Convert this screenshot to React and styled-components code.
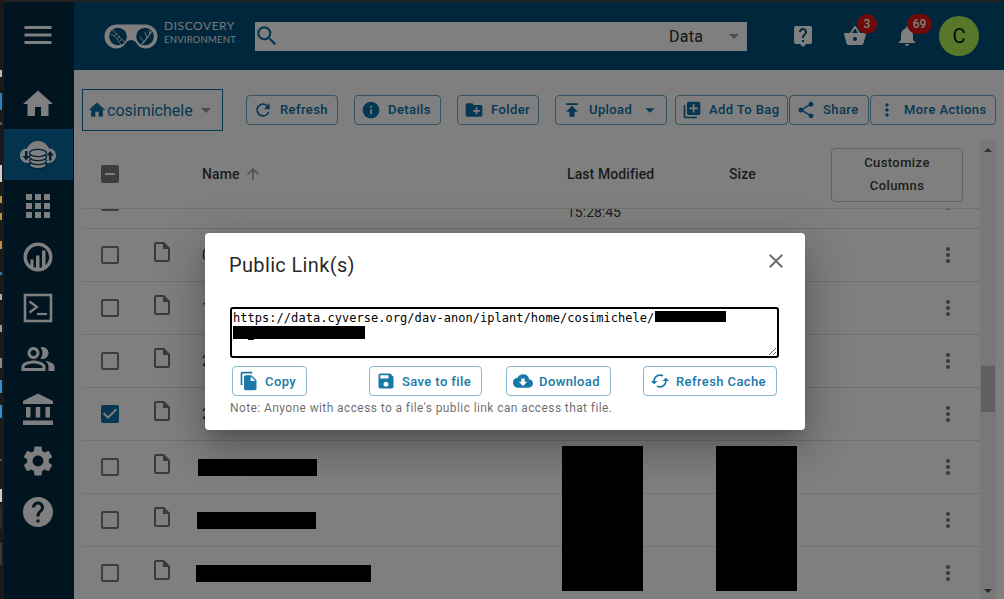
import styled, { createGlobalStyle } from 'styled-components';
import {
  MdAccountBalance,
  MdApps,
  MdArrowDropDown,
  MdArrowUpward,
  MdCached,
  MdCheckBox,
  MdCheckBoxOutlineBlank,
  MdClose,
  MdCloudDownload,
  MdCreateNewFolder,
  MdFileCopy,
  MdHelp,
  MdHome,
  MdIndeterminateCheckBox,
  MdInfo,
  MdLibraryAdd,
  MdLiveHelp,
  MdMenu,
  MdMoreVert,
  MdNotifications,
  MdOutlineInsertDriveFile,
  MdOutlinePeopleAlt,
  MdPublish,
  MdRefresh,
  MdSave,
  MdSearch,
  MdSettings,
  MdShare,
  MdShoppingBasket,
} from 'react-icons/md';

const BLUE = '#0c6ea6';

const GlobalStyle = createGlobalStyle`
  html, body {
    margin: 0;
    height: 100%;
    overflow: hidden;
    background: #1a1a1a;
    font-family: Roboto, "Liberation Sans", sans-serif;
  }
  #root { height: 100%; }
  * { box-sizing: border-box; }
`;

// scraps of the desktop showing at the left edge of the browser window
const desktopBits = [
  { top: 70, height: 7, color: '#b8b8b8' },
  { top: 93, height: 17, color: '#2a80c0' },
  { top: 122, height: 3, color: '#555' },
  { top: 165, height: 17, color: '#ccc' },
  { top: 196, height: 7, color: '#b8923c' },
  { top: 213, height: 7, color: '#b8923c' },
  { top: 241, height: 8, color: '#b8923c' },
  { top: 272, height: 3, color: '#2a80a0' },
  { top: 294, height: 6, color: '#aaa' },
  { top: 325, height: 7, color: '#999' },
  { top: 358, height: 10, color: '#888' },
  { top: 380, height: 13, color: '#2a90d0' },
  { top: 405, height: 13, color: '#2a90d0' },
  { top: 459, height: 2, color: '#555' },
  { top: 489, height: 13, color: '#ccc' },
  { top: 505, height: 24, color: '#2c2c2c' },
  { top: 543, height: 22, color: '#3a3a3a' },
];

const sideItems = [
  { key: 'home', icon: <MdHome size={36} /> },
  { key: 'data', icon: <DataIcon />, active: true },
  { key: 'apps', icon: <MdApps size={36} /> },
  { key: 'analyses', icon: <AnalysesIcon /> },
  { key: 'vice', icon: <TerminalIcon /> },
  { key: 'teams', icon: <MdOutlinePeopleAlt size={36} /> },
  { key: 'collections', icon: <MdAccountBalance size={36} /> },
  { key: 'settings', icon: <MdSettings size={36} /> },
  { key: 'help', icon: <MdHelp size={36} /> },
];

const tools = [
  { label: 'Refresh', icon: <MdRefresh size={20} />, w: 92, ml: 23 },
  { label: 'Details', icon: <MdInfo size={20} />, w: 87, ml: 16 },
  { label: 'Folder', icon: <MdCreateNewFolder size={20} />, w: 82, ml: 16 },
  { label: 'Upload', icon: <MdPublish size={20} />, w: 112, ml: 16, caret: true },
  { label: 'Add To Bag', icon: <MdLibraryAdd size={20} />, w: 113, ml: 8 },
  { label: 'Share', icon: <MdShare size={20} />, w: 80, ml: 1 },
  { label: 'More Actions', icon: <MdMoreVert size={20} />, w: 126, ml: 1 },
];

const rows = [
  { name: '', first: true },
  { name: '0' },
  { name: '1' },
  { name: '2' },
  { name: '2', checked: true },
  { hidden: 119 },
  { hidden: 119, nudge: -1 },
  { hidden: 175, nudge: -2 },
];

const linkButtons = [
  { label: 'Copy', icon: <MdFileCopy size={20} />, w: 75, ml: 0 },
  { label: 'Save to file', icon: <MdSave size={20} />, w: 113, ml: 62 },
  { label: 'Download', icon: <MdCloudDownload size={20} />, w: 105, ml: 24 },
  { label: 'Refresh Cache', icon: <MdCached size={20} />, w: 134, ml: 32 },
];

function Logo() {
  return (
    <svg width="54" height="25" viewBox="0 0 54 25">
      <path
        d="M12.5 0.5H41.5A12 12 0 0 1 41.5 24.5C36 24.5 34 21 31.5 18C29.5 15.5 24.5 15.5 22.5 18C20 21 18 24.5 12.5 24.5A12 12 0 0 1 12.5 0.5Z"
        fill="#fff"
      />
      <circle cx="14" cy="12.5" r="8.8" fill="#004f78" />
      <circle cx="41" cy="12.5" r="8.8" fill="#004f78" />
      <g fill="none" stroke="#fff" strokeWidth="0.8">
        <path d="M8 6C12 8 16 15 21 18" />
        <path d="M7 11C12 11 15 18 17 21" />
        <path d="M10 12L13 9M13 15L16 12M16 17L18 15" />
        <path d="M38 20C41 17 44 13 48 7" strokeWidth="1.2" />
        <path d="M36 13L40 18M41 8L43 14M45 6L45.5 10" />
      </g>
    </svg>
  );
}

function DataIcon() {
  return (
    <svg width="36" height="30" viewBox="0 0 36 30">
      <path
        d="M8 23C3 23 0 19.5 0 15.5C0 11.5 3 8.5 7 8.5C9 4 13 1 18 1C23 1 27 4 29 8.5C33 8.5 36 11.5 36 15.5C36 19.5 33 23 28 23Z"
        fill="#fff"
      />
      <g fill="#fff" stroke="#08416a" strokeWidth="1.3">
        <ellipse cx="18" cy="25" rx="8.5" ry="3.6" />
        <ellipse cx="18" cy="21" rx="8.5" ry="3.6" />
        <ellipse cx="18" cy="17" rx="8.5" ry="3.6" />
        <ellipse cx="18" cy="13" rx="8.5" ry="3.6" />
      </g>
      <path d="M5 11H7.5V16H10L6.2 20.5L2.5 16H5Z" fill="#08416a" />
      <path d="M29 20.5H31.5V15.5H34L30.2 11L26.5 15.5H29Z" fill="#08416a" />
    </svg>
  );
}

function AnalysesIcon() {
  return (
    <svg width="36" height="36" viewBox="0 0 36 36">
      <circle cx="18" cy="18" r="12.8" fill="none" stroke="#fff" strokeWidth="3.4" />
      <path d="M10.5 28V20.5H13.5V29.5Z M16 30.5V16.5H19.5V30.5Z M22 29.5V11.5H25.5V27.5Z" fill="#fff" />
    </svg>
  );
}

function TerminalIcon() {
  return (
    <svg width="36" height="36" viewBox="0 0 36 36">
      <rect x="5" y="5" width="26" height="26" fill="none" stroke="#fff" strokeWidth="2.6" />
      <path d="M9.5 11.5L17 17L9.5 22.5" fill="none" stroke="#fff" strokeWidth="2.2" />
      <path d="M17 24H27" fill="none" stroke="#fff" strokeWidth="2.2" />
    </svg>
  );
}

function App() {
  return (
    <Desktop>
      <GlobalStyle />
      <Strip>
        {desktopBits.map((bit) => (
          <DesktopBit key={bit.top} $top={bit.top} $height={bit.height} $color={bit.color} />
        ))}
      </Strip>
      <Browser>
        <TopLine />
        <Body>
          <Sidebar>
            <MenuButton>
              <MdMenu size={36} />
            </MenuButton>
            <SideList>
              {sideItems.map((item) => (
                <SideItem key={item.key} $active={item.active}>
                  {item.icon}
                </SideItem>
              ))}
            </SideList>
          </Sidebar>
          <Main>
            <Header>
              <LogoWrap>
                <Logo />
                <LogoText>
                  <LogoTop>DISCOVERY</LogoTop>
                  <LogoBottom>ENVIRONMENT</LogoBottom>
                </LogoText>
              </LogoWrap>
              <Search>
                <SearchIcon>
                  <MdSearch size={26} />
                </SearchIcon>
                <SearchScope>Data</SearchScope>
                <MdArrowDropDown size={24} color="#9a9a9a" />
              </Search>
              <HeaderIcons>
                <HeaderIcon>
                  <MdLiveHelp size={24} />
                </HeaderIcon>
                <HeaderIcon>
                  <MdShoppingBasket size={24} />
                  <Badge $left={14} $w={20}>3</Badge>
                </HeaderIcon>
                <HeaderIcon>
                  <MdNotifications size={24} />
                  <Badge $left={12} $w={25}>69</Badge>
                </HeaderIcon>
              </HeaderIcons>
              <Avatar>C</Avatar>
            </Header>

            <Toolbar>
              <PathSelect>
                <MdHome size={20} color={BLUE} />
                <PathName>cosimichele</PathName>
                <MdArrowDropDown size={24} color="#9a9a9a" />
              </PathSelect>
              {tools.map((tool) => (
                <ToolButton key={tool.label} $w={tool.w} $ml={tool.ml}>
                  {tool.icon}
                  <span>{tool.label}</span>
                  {tool.caret && <MdArrowDropDown size={22} />}
                </ToolButton>
              ))}
            </Toolbar>

            <TableFrame>
              <TableArea>
                <HeadRow>
                  <CheckCell>
                    <MdIndeterminateCheckBox size={24} color="#7a7a7a" />
                  </CheckCell>
                  <span />
                  <NameHead>
                    Name <MdArrowUpward size={18} color="#9a9a9a" />
                  </NameHead>
                  <HeadLabel>Last Modified</HeadLabel>
                  <HeadLabel>Size</HeadLabel>
                  <CustomizeButton>Customize Columns</CustomizeButton>
                </HeadRow>
                <RowsClip>
                  {rows.map((row, i) => (
                    <Row key={i} $first={row.first}>
                      <CheckCell>
                        {row.first ? (
                          <MdIndeterminateCheckBox size={24} color="#7a7a7a" />
                        ) : row.checked ? (
                          <MdCheckBox size={24} color={BLUE} />
                        ) : (
                          <MdCheckBoxOutlineBlank size={24} color="#7a7a7a" />
                        )}
                      </CheckCell>
                      <FileCell>{!row.first && <MdOutlineInsertDriveFile size={24} />}</FileCell>
                      <NameCell $nudge={row.nudge}>
                        {row.hidden ? <InlineRedaction $w={row.hidden} /> : row.name}
                      </NameCell>
                      <DateCell>{row.first && '15:28:45'}</DateCell>
                      <span />
                      <MenuCell>
                        <MdMoreVert size={24} />
                      </MenuCell>
                    </Row>
                  ))}
                  <TallRedaction $left={480} />
                  <TallRedaction $left={634} />
                </RowsClip>
              </TableArea>
              <ScrollTrack>
                <ArrowUp />
                <ScrollThumb />
                <ArrowDown />
              </ScrollTrack>
            </TableFrame>
          </Main>
        </Body>

        <Overlay />
        <Modal>
          <CloseButton>
            <MdClose size={24} />
          </CloseButton>
          <ModalTitle>Public Link(s)</ModalTitle>
          <LinkWrap>
            <LinkBox
              readOnly
              spellCheck={false}
              value="https://data.cyverse.org/dav-anon/iplant/home/cosimichele/"
            />
            <LinkRedaction $left={425} $top={4} $w={71} $h={11} />
            <LinkRedaction $left={3} $top={19} $w={132} $h={13} />
            <LinkRedaction $left={18} $top={32} $w={6} $h={1} />
          </LinkWrap>
          <LinkActions>
            {linkButtons.map((btn) => (
              <LinkButton key={btn.label} $w={btn.w} $ml={btn.ml}>
                {btn.icon}
                <span>{btn.label}</span>
              </LinkButton>
            ))}
          </LinkActions>
          <Note>Note: Anyone with access to a file's public link can access that file.</Note>
        </Modal>
      </Browser>
    </Desktop>
  );
}

export default App;

const Desktop = styled.div`
  display: flex;
  height: 100vh;
  overflow: hidden;
`;

const Strip = styled.div`
  position: relative;
  flex: 0 0 4px;
  background: #1a1a1a;
`;

const DesktopBit = styled.div`
  position: absolute;
  left: 0;
  width: 2px;
  top: ${(p) => p.$top}px;
  height: ${(p) => p.$height}px;
  background: ${(p) => p.$color};
`;

const Browser = styled.div`
  position: relative;
  flex: 1;
  display: flex;
  flex-direction: column;
  min-width: 0;
`;

const TopLine = styled.div`
  flex: 0 0 2px;
  background: #444;
`;

const Body = styled.div`
  flex: 1;
  display: flex;
  min-height: 0;
  background: #fff;
`;

const Sidebar = styled.nav`
  flex: 0 0 70px;
  background: #002a40;
  color: #fff;
`;

const MenuButton = styled.div`
  height: 66px;
  display: flex;
  align-items: center;
  justify-content: center;
  padding-right: 3px;
`;

const SideList = styled.div`
  padding-top: 10px;
`;

const SideItem = styled.div`
  height: 51px;
  margin-right: 1px;
  padding-right: 2px;
  display: flex;
  align-items: center;
  justify-content: center;
  background: ${(p) => (p.$active ? '#08669f' : 'transparent')};
`;

const Main = styled.main`
  flex: 1;
  min-width: 0;
  display: flex;
  flex-direction: column;
`;

const Header = styled.header`
  flex: 0 0 68px;
  display: flex;
  align-items: center;
  padding-left: 30px;
  background: #004f78;
  color: #fff;
`;

const LogoWrap = styled.div`
  flex: 0 0 151px;
  display: flex;
  align-items: center;
  gap: 6px;
`;

const LogoText = styled.div`
  display: flex;
  flex-direction: column;
  margin-bottom: 7px;
  color: #e8eef2;
  line-height: 14px;
`;

const LogoTop = styled.span`
  font-family: Lato, sans-serif;
  font-size: 12px;
  letter-spacing: 0.55px;
`;

const LogoBottom = styled.span`
  font-family: Lato, sans-serif;
  font-size: 9.5px;
  letter-spacing: 0.2px;
`;

const Search = styled.div`
  flex: 0 0 492px;
  height: 29px;
  display: flex;
  align-items: center;
  background: #fff;
  padding-right: 1px;
`;

const SearchIcon = styled.div`
  flex: 1;
  display: flex;
  color: ${BLUE};
  margin-left: -1px;
`;

const SearchScope = styled.span`
  width: 53px;
  font-size: 16px;
  letter-spacing: 0.3px;
  color: #2a2a2a;
`;

const HeaderIcons = styled.div`
  display: flex;
  gap: 28px;
  margin-left: 44px;
`;

const HeaderIcon = styled.div`
  position: relative;
  width: 24px;
  height: 24px;
  color: #fff;
`;

const Badge = styled.span`
  position: absolute;
  top: -10px;
  left: ${(p) => p.$left}px;
  width: ${(p) => p.$w}px;
  height: 20px;
  border-radius: 10px;
  background: #e01414;
  color: #fff;
  font-size: 12px;
  font-weight: 500;
  line-height: 20px;
  text-align: center;
`;

const Avatar = styled.div`
  width: 40px;
  height: 40px;
  margin-left: 20px;
  border-radius: 50%;
  background: #aef055;
  color: #111;
  font-size: 20px;
  line-height: 40px;
  text-align: center;
`;

const Toolbar = styled.div`
  flex: 0 0 70px;
  display: flex;
  align-items: center;
  padding: 10px 0 0 8px;
`;

const PathSelect = styled.div`
  flex: 0 0 141px;
  height: 42px;
  display: flex;
  align-items: center;
  padding-left: 4px;
  border: 1px solid ${BLUE};
  color: ${BLUE};
`;

const PathName = styled.span`
  font-size: 16px;
  margin-right: 1px;
`;

const ToolButton = styled.button`
  flex: 0 0 ${(p) => p.$w}px;
  height: 30px;
  margin-left: ${(p) => p.$ml}px;
  display: flex;
  align-items: center;
  gap: 7px;
  padding: 0 0 0 6px;
  border: 1px solid rgba(12, 100, 150, 0.6);
  border-radius: 4px;
  background: transparent;
  color: ${BLUE};
  font-family: inherit;
  font-size: 13px;
  font-weight: 500;
  letter-spacing: 0.4px;
  white-space: nowrap;

  span {
    margin-bottom: 2px;
  }
`;

const TableFrame = styled.div`
  flex: 0 0 457px;
  display: flex;
  margin-left: 8px;
  width: 914px;
`;

const TableArea = styled.div`
  flex: 0 0 898px;
  display: flex;
  flex-direction: column;
  border-bottom: 1px solid #e0e0e0;
`;

const HeadRow = styled.div`
  flex: 0 0 69px;
  display: grid;
  grid-template-columns: 56px 48px 381px 162px 102px 132px;
  align-items: center;
  border-bottom: 1px solid #e0e0e0;
`;

const CheckCell = styled.div`
  display: flex;
  justify-content: center;
`;

const HeadLabel = styled.span`
  font-size: 14px;
  font-weight: 500;
  letter-spacing: 0.1px;
  color: rgba(0, 0, 0, 0.8);
`;

const NameHead = styled(HeadLabel)`
  display: flex;
  align-items: center;
  gap: 4px;
  padding-left: 16px;
`;

const CustomizeButton = styled.button`
  height: 54px;
  margin-top: 2px;
  padding: 0 20px 2px;
  border: 1px solid rgba(0, 0, 0, 0.23);
  border-radius: 4px;
  background: transparent;
  color: rgba(0, 0, 0, 0.8);
  font-family: inherit;
  font-size: 13px;
  font-weight: 500;
  letter-spacing: 0.4px;
  line-height: 23px;
`;

const RowsClip = styled.div`
  position: relative;
  flex: 1;
  overflow: hidden;
`;

const Row = styled.div`
  height: 53px;
  margin-top: ${(p) => (p.$first ? '-33px' : '0')};
  display: grid;
  grid-template-columns: 56px 48px 381px 162px 189px 60px;
  align-items: center;
  border-bottom: 1px solid #e0e0e0;
`;

const FileCell = styled.div`
  display: flex;
  justify-content: center;
  padding-bottom: 6px;
  color: #757575;
`;

const NameCell = styled.div`
  padding-left: ${(p) => 16 + (p.$nudge || 0)}px;
  font-size: 14px;
  color: rgba(0, 0, 0, 0.87);
`;

const DateCell = styled.div`
  padding-top: 19px;
  font-size: 14px;
  color: rgba(0, 0, 0, 0.8);
`;

const MenuCell = styled.div`
  display: flex;
  justify-content: center;
  color: #757575;
`;

const InlineRedaction = styled.div`
  width: ${(p) => p.$w}px;
  height: 17px;
  margin-left: -4px;
  background: #000;
`;

const TallRedaction = styled.div`
  position: absolute;
  top: 237px;
  left: ${(p) => p.$left}px;
  width: 81px;
  height: 145px;
  background: #000;
`;

const ScrollTrack = styled.div`
  position: relative;
  flex: 0 0 16px;
  background: #f1f1f1;
`;

const ScrollThumb = styled.div`
  position: absolute;
  top: 226px;
  left: 1px;
  width: 14px;
  height: 46px;
  background: #c1c1c1;
`;

const ArrowUp = styled.div`
  position: absolute;
  top: 8px;
  left: 4px;
  border: 4px solid transparent;
  border-top: 0;
  border-bottom: 4px solid #606060;
`;

const ArrowDown = styled.div`
  position: absolute;
  bottom: 8px;
  left: 4px;
  border: 4px solid transparent;
  border-bottom: 0;
  border-top: 4px solid #505050;
`;

const Overlay = styled.div`
  position: absolute;
  inset: 0;
  background: rgba(0, 0, 0, 0.5);
`;

const Modal = styled.div`
  position: absolute;
  left: 201px;
  top: 233px;
  width: 600px;
  height: 197px;
  padding: 16px 24px;
  border-radius: 4px;
  background: #fff;
  box-shadow: 0 11px 15px -7px rgba(0, 0, 0, 0.2), 0 24px 38px 3px rgba(0, 0, 0, 0.14),
    0 9px 46px 8px rgba(0, 0, 0, 0.12);
`;

const CloseButton = styled.div`
  position: absolute;
  top: 16px;
  right: 17px;
  height: 24px;
  color: #6f6f6f;
`;

const ModalTitle = styled.h2`
  margin: 0;
  font-size: 20px;
  font-weight: 400;
  line-height: 32px;
  letter-spacing: 0.35px;
  color: rgba(0, 0, 0, 0.87);
`;

const LinkWrap = styled.div`
  position: relative;
  width: 549px;
  height: 51px;
  margin: 26px 0 0 1px;
`;

const LinkBox = styled.textarea`
  display: block;
  width: 549px;
  height: 51px;
  padding: 2px 1px 1px;
  border: 2px solid #000;
  border-radius: 3px;
  outline: none;
  background: #fff;
  color: #000;
  font-family: "DejaVu Sans Mono", monospace;
  font-size: 12px;
  letter-spacing: 0.04px;
  line-height: 15px;
`;

const LinkRedaction = styled.div`
  position: absolute;
  left: ${(p) => p.$left}px;
  top: ${(p) => p.$top}px;
  width: ${(p) => p.$w}px;
  height: ${(p) => p.$h}px;
  background: #000;
`;

const LinkActions = styled.div`
  display: flex;
  margin: 8px 0 0 3px;
`;

const LinkButton = styled.button`
  flex: 0 0 ${(p) => p.$w}px;
  height: 30px;
  margin-left: ${(p) => p.$ml}px;
  display: flex;
  align-items: center;
  gap: 6px;
  padding: 0 0 0 6px;
  border: 1px solid rgba(9, 113, 171, 0.5);
  border-radius: 4px;
  background: transparent;
  color: #1a78a8;
  font-family: inherit;
  font-size: 13px;
  font-weight: 500;
  letter-spacing: 0.4px;
  white-space: nowrap;
`;

const Note = styled.p`
  margin: 4px 0 0 1px;
  font-size: 12px;
  line-height: 16px;
  letter-spacing: 0.4px;
  color: rgba(0, 0, 0, 0.6);
`;
